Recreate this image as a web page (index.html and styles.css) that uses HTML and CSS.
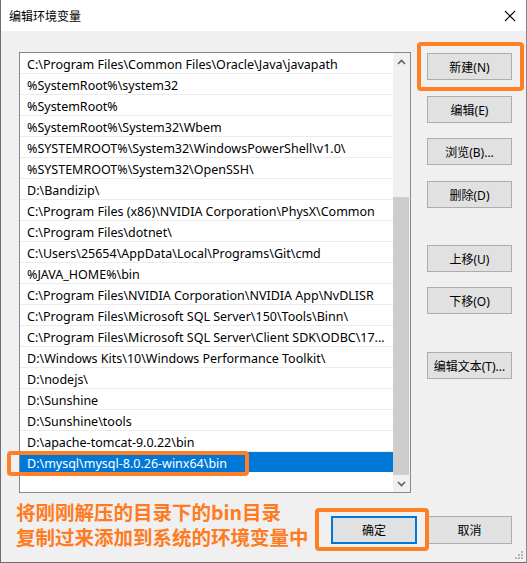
FILE: index.html
```html
<!DOCTYPE html>
<html lang="zh">
<head>
<meta charset="utf-8">
<title>编辑环境变量</title>
<link rel="stylesheet" href="styles.css">
</head>
<body>
<div class="window">
  <div class="titlebar">
    <span class="title">编辑环境变量</span>
    <svg class="close" width="12" height="12" viewBox="0 0 12 12"><path d="M1 1 L11 11 M11 1 L1 11" stroke="#000" stroke-width="1.1" fill="none"/></svg>
  </div>
  <div class="main">
    <div class="listbox">
      <ul class="rows">
        <li>C:\Program Files\Common Files\Oracle\Java\javapath</li>
        <li>%SystemRoot%\system32</li>
        <li>%SystemRoot%</li>
        <li>%SystemRoot%\System32\Wbem</li>
        <li>%SYSTEMROOT%\System32\WindowsPowerShell\v1.0\</li>
        <li>%SYSTEMROOT%\System32\OpenSSH\</li>
        <li>D:\Bandizip\</li>
        <li>C:\Program Files (x86)\NVIDIA Corporation\PhysX\Common</li>
        <li>C:\Program Files\dotnet\</li>
        <li>C:\Users\25654\AppData\Local\Programs\Git\cmd</li>
        <li>%JAVA_HOME%\bin</li>
        <li>C:\Program Files\NVIDIA Corporation\NVIDIA App\NvDLISR</li>
        <li>C:\Program Files\Microsoft SQL Server\150\Tools\Binn\</li>
        <li>C:\Program Files\Microsoft SQL Server\Client SDK\ODBC\17...</li>
        <li>D:\Windows Kits\10\Windows Performance Toolkit\</li>
        <li>D:\nodejs\</li>
        <li>D:\Sunshine</li>
        <li>D:\Sunshine\tools</li>
        <li>D:\apache-tomcat-9.0.22\bin</li>
        <li class="selected">D:\mysql\mysql-8.0.26-winx64\bin</li>
      </ul>
      <div class="scrollbar">
        <div class="arrow"><svg width="9" height="6" viewBox="0 0 9 6"><path d="M1 5 L4.5 1.5 L8 5" stroke="#606060" stroke-width="1.6" fill="none"/></svg></div>
        <div class="track"><div class="thumb"></div></div>
        <div class="arrow"><svg width="9" height="6" viewBox="0 0 9 6"><path d="M1 1 L4.5 4.5 L8 1" stroke="#606060" stroke-width="1.6" fill="none"/></svg></div>
      </div>
    </div>
    <div class="side">
      <button class="btn">新建(N)</button>
      <button class="btn">编辑(E)</button>
      <button class="btn">浏览(B)...</button>
      <button class="btn">删除(D)</button>
      <button class="btn far">上移(U)</button>
      <button class="btn">下移(O)</button>
      <button class="btn far2">编辑文本(T)...</button>
    </div>
  </div>
  <div class="footer">
    <div class="note">
      <div>将刚刚解压的目录下的bin目录</div>
      <div>复制过来添加到系统的环境变量中</div>
    </div>
    <div class="actions">
      <button class="btn default">确定</button>
      <button class="btn">取消</button>
    </div>
  </div>
  <svg class="grip" width="8" height="8" viewBox="0 0 8 8">
    <rect x="6" y="0" width="2" height="2" fill="#b5b5b5"/>
    <rect x="3" y="3" width="2" height="2" fill="#b5b5b5"/>
    <rect x="6" y="3" width="2" height="2" fill="#b5b5b5"/>
    <rect x="0" y="6" width="2" height="2" fill="#b5b5b5"/>
    <rect x="3" y="6" width="2" height="2" fill="#b5b5b5"/>
    <rect x="6" y="6" width="2" height="2" fill="#b5b5b5"/>
  </svg>
  <div class="mark mark-new"></div>
  <div class="mark mark-row"></div>
  <div class="mark mark-ok"></div>
</div>
</body>
</html>
```
FILE: styles.css
```css
* { box-sizing: border-box; }
html, body { margin: 0; padding: 0; background: #f0f0f0; }
body {
  font-family: "Noto Sans", "Noto Sans CJK SC", sans-serif;
  font-size: 12px;
  color: #000;
}
.window {
  position: relative;
  width: 527px;
  height: 563px;
  background: #f0f0f0;
  border-left: 1px solid #6f6f6f;
  border-right: 1px solid #8a8a8a;
  border-bottom: 1px solid #6f6f6f;
  overflow: hidden;
}
.titlebar {
  height: 31px;
  background: #fff;
  display: flex;
  align-items: center;
  justify-content: space-between;
  padding: 0 10px 0 8px;
}
.title {
  font-family: "Noto Sans CJK SC", sans-serif;
  font-size: 12px;
  line-height: 30px;
}
.close { display: block; }
.main {
  display: flex;
  align-items: flex-start;
  padding: 21px 0 0 18px;
  gap: 16px;
}
.listbox {
  width: 392px;
  height: 441px;
  border: 1px solid #828790;
  background: #fff;
  display: flex;
}
.rows {
  list-style: none;
  margin: 0;
  padding: 0;
  flex: 1;
  overflow: hidden;
}
.rows li {
  height: 21px;
  line-height: 24px;
  font-size: 12.5px;
  padding-left: 7px;
  border-bottom: 1px solid #ececec;
  white-space: nowrap;
  overflow: hidden;
}
.rows li.selected {
  background: #0078d7;
  color: #fff;
  border-bottom-color: #0078d7;
  height: 20px;
}
.scrollbar {
  width: 17px;
  background: #f0f0f0;
  display: flex;
  flex-direction: column;
}
.arrow {
  height: 17px;
  display: flex;
  align-items: center;
  justify-content: center;
}
.track {
  flex: 1;
  display: flex;
  flex-direction: column;
  justify-content: flex-end;
}
.thumb {
  height: 278px;
  margin-right: 1px;
  background: #cdcdcd;
}
.side {
  display: flex;
  flex-direction: column;
  padding-top: 1px;
  gap: 15px;
}
.btn {
  width: 85px;
  height: 27px;
  background: #e1e1e1;
  border: 1px solid #adadad;
  border-radius: 0;
  font-family: "Noto Sans", "Noto Sans CJK SC", sans-serif;
  font-size: 12px;
  color: #000;
  padding: 0;
  margin: 0;
}
.side .btn:nth-child(2), .side .btn:nth-child(4) { margin-top: 1px; }
.side .btn.far { margin-top: 22px; }
.side .btn.far2 { margin-top: 23px; }
.footer {
  display: flex;
  justify-content: space-between;
  align-items: flex-start;
  padding: 0 14px 0 15px;
}
.note {
  margin-top: 6px;
  font-family: "Noto Sans CJK SC", sans-serif;
  font-weight: bold;
  font-size: 19.5px;
  line-height: 25px;
  color: #ff7b22;
}
.actions {
  display: flex;
  margin-top: 23px;
  gap: 10px;
}
.actions .btn { height: 28px; }
.btn.default { border: 2px solid #0078d7; width: 86px; }
.grip {
  position: absolute;
  right: 3px;
  bottom: 3px;
}
.mark {
  position: absolute;
  border: 4px solid #ff7f27;
  border-radius: 4px;
}
.mark-new { left: 416px; top: 42px; width: 107px; height: 49px; }
.mark-row { left: 6px; top: 451px; width: 242px; height: 25px; }
.mark-ok { left: 314px; top: 508px; width: 114px; height: 43px; }
```
